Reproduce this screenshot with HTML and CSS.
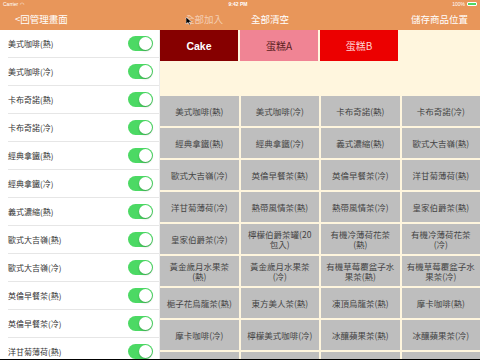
FILE: index.html
```html
<!DOCTYPE html>
<html>
<head>
<meta charset="utf-8">
<title>商品位置</title>
<link rel="stylesheet" href="styles.css">
</head>
<body>
<div class="app">
  <div class="header">
    <div class="status">
      <span class="carrier">Carrier &#x25E0;</span>
      <span class="clock">9:42 PM</span>
      <span class="battery">100% <i class="cell"><b></b></i></span>
    </div>
    <div class="nav">
      <span class="back">&lt;回管理畫面</span>
      <span class="actions">
        <span class="dim">全部加入</span>
        <span>全部清空</span>
      </span>
      <span class="save">儲存商品位置</span>
      <svg class="cursor" width="6" height="8" viewBox="0 0 6 8"><path d="M0 0 L0 7 L2 5.4 L3.4 8 L4.4 7.5 L3.1 5 L5.6 5 Z" fill="#000" stroke="#fff" stroke-width=".5"/></svg>
    </div>
  </div>

  <div class="main">
    <ul class="list" id="list"></ul>

    <div class="board">
      <div class="cats">
        <div class="cat cake">Cake</div>
        <div class="cat cake-a">蛋糕A</div>
        <div class="cat cake-b">蛋糕B</div>
      </div>
      <div class="grid" id="grid"></div>
    </div>
  </div>
</div>

<script type="text/javascript">
var items = ['美式咖啡(熱)','美式咖啡(冷)','卡布奇諾(熱)','卡布奇諾(冷)',
  '經典拿鐵(熱)','經典拿鐵(冷)','義式濃縮(熱)','歐式大吉嶺(熱)',
  '歐式大吉嶺(冷)','英倫早餐茶(熱)','英倫早餐茶(冷)','洋甘菊薄荷(熱)',
  '洋甘菊薄荷(冷)','熱帶風情茶(熱)','熱帶風情茶(冷)','皇家伯爵茶(熱)',
  '皇家伯爵茶(冷)','檸檬伯爵茶罐(20包入)','有機冷薄荷花茶(熱)','有機冷薄荷花茶(冷)',
  '黃金歲月水果茶(熱)','黃金歲月水果茶(冷)','有機草莓覆盆子水果茶(熱)','有機草莓覆盆子水果茶(冷)',
  '梔子花烏龍茶(熱)','東方美人茶(熱)','凍頂烏龍茶(熱)','摩卡咖啡(熱)',
  '摩卡咖啡(冷)','檸檬美式咖啡(冷)','冰釀蘋果茶(熱)','冰釀蘋果茶(冷)',
  '','','',''];

var list = document.getElementById('list');
var grid = document.getElementById('grid');
var i;
for (i = 0; i < 12; ++i) {
  var li = document.createElement('li');
  li.innerHTML = '<span>' + items[i] + '</span><i class="toggle"></i>';
  list.appendChild(li);
}
for (i = 0; i < items.length; ++i) {
  var cell = document.createElement('div');
  cell.className = 'item';
  cell.textContent = items[i];
  grid.appendChild(cell);
}
</script>
</body>
</html>
```

FILE: styles.css
```css
html, body { margin: 0; padding: 0; background: #000; }
body { font-family: "Noto Sans CJK TC", "Liberation Sans", sans-serif; }

.app { width: 480px; height: 359px; overflow: hidden; background: #fff; display: flex; flex-direction: column; }

/* header */
.header { background: #e8965a; color: #fff; flex: 0 0 30px; }
.status { height: 8px; display: flex; align-items: center; justify-content: space-between;
  font-family: "Liberation Sans", sans-serif; font-size: 5px; padding: 0 3px; }
.status .clock { font-weight: bold; }
.battery { display: flex; align-items: center; gap: 2px; }
.cell { display: inline-block; width: 10px; height: 4px; border: 1px solid #fff; border-radius: 1px; box-sizing: border-box; padding: 0; }
.cell b { display: block; height: 100%; background: #4cd964; }
.nav { height: 22px; display: flex; align-items: center; font-size: 9.5px; padding: 0 12px 0 15px; position: relative; }
.back { flex: 0 0 170px; }
.actions { display: flex; gap: 28px; }
.dim { color: rgba(255,255,255,.55); }
.save { margin-left: auto; }
.cursor { position: absolute; left: 186px; top: 9px; }

/* body */
.main { flex: 1; display: flex; min-height: 0; }

.list { list-style: none; margin: 0; padding: 0; width: 159px; border-right: 1px solid #ececec; flex: 0 0 auto; }
.list li { height: 28px; box-sizing: border-box; margin-left: 8px; padding-right: 6px;
  border-bottom: 1px solid #e6e6e6; display: flex; align-items: center; justify-content: space-between;
  font-size: 8px; color: #333; }
.toggle { display: block; width: 25px; height: 15px; border-radius: 8px; background: #4cd964; position: relative; }
.toggle:after { content: ""; position: absolute; right: 1px; top: 1px; width: 13px; height: 13px;
  border-radius: 50%; background: #fff; box-shadow: 0 1px 2px rgba(0,0,0,.25); }

.board { flex: 1; background: #fff6de; display: flex; flex-direction: column; min-height: 0; }
.cats { display: flex; gap: 2px; flex: 0 0 31px; margin-bottom: 35px; }
.cat { width: 78px; display: flex; align-items: center; justify-content: center; font-size: 10px; }
.cake { background: #860000; color: #fff; font-family: "Liberation Sans", sans-serif; font-weight: bold; font-size: 10.5px; }
.cake-a { background: #f08494; color: #5a2020; }
.cake-b { background: #ec0000; color: #ffd6d6; }

.grid { flex: 0 0 auto; display: grid; grid-template-columns: repeat(4, 78.5px); grid-auto-rows: 30px; gap: 2px; }
.item { background: #bebebe; color: #444; font-size: 8.5px; line-height: 10px; text-align: center;
  display: flex; align-items: center; justify-content: center; padding: 0 4px; }
```
